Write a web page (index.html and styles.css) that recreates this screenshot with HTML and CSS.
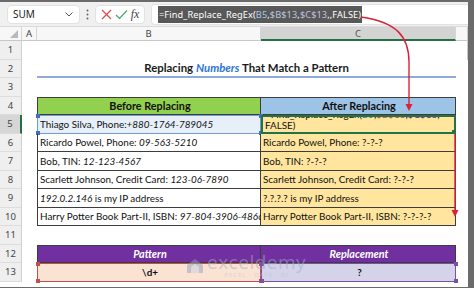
FILE: index.html
```html
<!DOCTYPE html>
<html lang="en">
<head>
    <meta charset="UTF-8">
    <title>Find_Replace_RegEx</title>
    <link rel="stylesheet" href="styles.css">
</head>
<body>
<div class="app">
    <div class="fbar">
        <div class="namebox">
            <span>SUM</span>
            <svg class="chev" width="8" height="5" viewBox="0 0 8 5"><path d="M0.5 0.5 L4 4 L7.5 0.5" fill="none" stroke="#555" stroke-width="1"/></svg>
        </div>
        <div class="dots">
            <svg width="3" height="11" viewBox="0 0 3 11"><circle cx="1.5" cy="1.5" r="1" fill="#666"/><circle cx="1.5" cy="5.5" r="1" fill="#666"/><circle cx="1.5" cy="9.5" r="1" fill="#666"/></svg>
        </div>
        <div class="btns">
            <svg width="11" height="11" viewBox="0 0 11 11"><path d="M1 1 L10 10 M10 1 L1 10" stroke="#e2474b" stroke-width="1.2"/></svg>
            <svg width="13" height="11" viewBox="0 0 13 11"><path d="M1 6 L4.5 9.5 L12 1.5" fill="none" stroke="#3fa86b" stroke-width="1.2"/></svg>
            <span class="fx">fx</span>
        </div>
        <div class="finput">
            <span class="sel">=Find_Replace_RegEx(<span class="ref1">B5</span>,<span class="ref2">$B$13</span>,<span class="ref3">$C$13</span>,,FALSE)</span>
        </div>
    </div>

    <div class="grid">
        <div class="corner"><svg width="8" height="8" viewBox="0 0 8 8"><path d="M8 0 L8 8 L0 8 Z" fill="#b9b9b9"/></svg></div>
        <div class="ch">A</div>
        <div class="ch">B</div>
        <div class="ch ch-sel">C</div>
        <div class="ch ch-end"></div>

        <!-- row 1 -->
        <div class="rh">1</div><div class="c"></div><div class="c"></div><div class="c"></div><div class="c"></div>

        <!-- row 2 -->
        <div class="rh">2</div><div class="c"></div>
        <div class="c title"><span>Replacing <em>Numbers</em> That Match a Pattern</span></div>
        <div class="c"></div>

        <!-- row 3 -->
        <div class="rh">3</div><div class="c"></div><div class="c"></div><div class="c"></div><div class="c"></div>

        <!-- row 4 -->
        <div class="rh">4</div><div class="c"></div>
        <div class="c t tl th th-green"><span>Before Replacing</span></div>
        <div class="c t th th-blue"><span>After Replacing</span></div>
        <div class="c"></div>

        <!-- row 5 -->
        <div class="rh rh-sel">5</div><div class="c"></div>
        <div class="c t tl ref-b5"><span>Thiago Silva, Phone:<i>+880-1764-789045</i></span>
            <span class="hd hd-blue tlh"></span><span class="hd hd-blue trh"></span><span class="hd hd-blue blh"></span><span class="hd hd-blue brh"></span>
        </div>
        <div class="c t out active">
            <div class="wrap">=Find_Replace_RegEx(<span class="fr1">B5</span>,<span class="fr2">$B$13</span>,<span class="fr3">$C$13</span>,<br>FALSE)</div>
            <span class="fill-handle"></span>
        </div>
        <div class="c"></div>

        <!-- row 6 -->
        <div class="rh">6</div><div class="c"></div>
        <div class="c t tl"><span>Ricardo Powel, Phone: <i>09-563-5210</i></span></div>
        <div class="c t out"><span>Ricardo Powel, Phone: ?-?-?</span></div>
        <div class="c"></div>

        <!-- row 7 -->
        <div class="rh">7</div><div class="c"></div>
        <div class="c t tl"><span>Bob, TIN: <i>12-123-4567</i></span></div>
        <div class="c t out"><span>Bob, TIN: ?-?-?</span></div>
        <div class="c"></div>

        <!-- row 8 -->
        <div class="rh">8</div><div class="c"></div>
        <div class="c t tl"><span>Scarlett Johnson, Credit Card: <i>123-06-7890</i></span></div>
        <div class="c t out"><span>Scarlett Johnson, Credit Card: ?-?-?</span></div>
        <div class="c"></div>

        <!-- row 9 -->
        <div class="rh">9</div><div class="c"></div>
        <div class="c t tl"><span><i>192.0.2.146</i> is my IP address</span></div>
        <div class="c t out"><span>?.?.?.? is my IP address</span></div>
        <div class="c"></div>

        <!-- row 10 -->
        <div class="rh">10</div><div class="c"></div>
        <div class="c t tl"><span>Harry Potter Book Part-II, ISBN: <i>97-804-3906-4866</i></span></div>
        <div class="c t out"><span>Harry Potter Book Part-II, ISBN: ?-?-?-?</span></div>
        <div class="c"></div>

        <!-- row 11 -->
        <div class="rh">11</div><div class="c"></div><div class="c"></div><div class="c"></div><div class="c"></div>

        <!-- row 12 -->
        <div class="rh">12</div><div class="c"></div>
        <div class="c t tl th th-purple"><span>Pattern</span></div>
        <div class="c t th th-purple"><span>Replacement</span></div>
        <div class="c"></div>

        <!-- row 13 -->
        <div class="rh">13</div><div class="c"></div>
        <div class="c t tl pat"><span>\d+</span>
            <span class="hd hd-red tlh"></span><span class="hd hd-red trh"></span><span class="hd hd-red blh"></span><span class="hd hd-red brh"></span>
        </div>
        <div class="c t rep"><span>?</span>
            <span class="hd hd-purple tlh"></span><span class="hd hd-purple trh"></span><span class="hd hd-purple blh"></span><span class="hd hd-purple brh"></span>
        </div>
        <div class="c"></div>
    </div>

    <div class="watermark">
        <svg width="18" height="16" viewBox="0 0 18 16"><path d="M9 1 L17 7 L17 15 L1 15 L1 7 Z" fill="#8fa3bf"/><path d="M5 9 L9 6 L13 9 L13 15 L5 15 Z" fill="#c7d1e0"/></svg>
        <div class="wm-text">
            <span class="wm-big">exceldemy</span>
            <span class="wm-small">EXCEL · DATA · BI</span>
        </div>
    </div>

    <svg class="arrows" width="474" height="288" viewBox="0 0 474 288">
        <path d="M361 17 C 396 22, 409 36, 409 62 L 409 105" fill="none" stroke="#d9213b" stroke-width="1.4"/>
        <path d="M405.5 104 L412.5 104 L409 111 Z" fill="#d9213b"/>
        <path d="M455 134 L455 211" fill="none" stroke="#d9213b" stroke-width="1.4"/>
        <path d="M451.5 210 L458.5 210 L455 217 Z" fill="#d9213b"/>
    </svg>
</div>
</body>
</html>
```

FILE: styles.css
```css
* {
    box-sizing: border-box;
}

body {
    margin: 0;
    background: #6b6b6b;
    font-family: 'Lato', 'Liberation Sans', sans-serif;
}

.app {
    position: relative;
    width: 474px;
    height: 288px;
    overflow: hidden;
    background: #6b6b6b;
    padding: 2px 6px 0 0;
}

/* Formula bar */
.fbar {
    height: 25px;
    background: #f0f0f0;
    display: flex;
    align-items: center;
    padding-left: 7px;
    border-bottom: 1px solid #dadada;
}

.namebox {
    width: 73px;
    height: 19px;
    background: #fff;
    border: 1px solid #e2e2e2;
    border-radius: 4px;
    display: flex;
    align-items: center;
    justify-content: space-between;
    padding: 0 6px 0 5px;
    font-family: 'Noto Sans', sans-serif;
    font-size: 10px;
    color: #222;
}

.dots {
    width: 15px;
    display: flex;
    justify-content: center;
}

.btns {
    width: 50px;
    height: 19px;
    background: #fff;
    border: 1px solid #e2e2e2;
    border-radius: 4px;
    display: flex;
    align-items: center;
    justify-content: space-around;
    padding: 0 3px;
}

.fx {
    font-family: 'Liberation Serif', serif;
    font-style: italic;
    font-size: 12px;
    color: #444;
}

.finput {
    flex: 1;
    margin-left: 6px;
    height: 21px;
    background: #fff;
    border: 1px solid #e2e2e2;
    border-right: none;
    border-radius: 4px 0 0 4px;
    display: flex;
    align-items: center;
    padding-left: 6px;
}

.sel {
    background: #585858;
    color: #fff;
    font-family: 'Noto Sans', sans-serif;
    font-size: 9.2px;
    line-height: 17px;
    padding: 0 1px;
    letter-spacing: 0.1px;
}

.ref1 { color: #a9c7ea; }
.ref2 { color: #b9c7dc; }
.ref3 { color: #c2bfe0; }

/* Sheet grid */
.grid {
    display: grid;
    grid-template-columns: 22px 15px 224px 195px 1fr;
    grid-template-rows: 14px repeat(13, 18.5px);
    background: #fff;
    height: 260px;
    font-size: 9.9px;
    color: #111;
}

.corner {
    background: #f7f7f7;
    border-right: 1px solid #d6d6d6;
    border-bottom: 1px solid #c8c8c8;
    display: flex;
    align-items: flex-end;
    justify-content: flex-end;
    padding: 0 3px 2px 0;
}

.ch {
    background: #f7f7f7;
    border-right: 1px solid #d6d6d6;
    border-bottom: 1px solid #c8c8c8;
    font-family: 'Noto Sans', sans-serif;
    font-size: 9.5px;
    color: #444;
    display: flex;
    align-items: center;
    justify-content: center;
}

.ch-sel {
    background: #d3d3d3;
    border-bottom: 2px solid #217346;
    color: #555;
}

.ch-end {
    border-right: 1px solid #c9c9c9;
}

.rh {
    background: #efefef;
    border-right: 1px solid #d0d0d0;
    border-bottom: 1px solid #dddddd;
    font-family: 'Noto Sans', sans-serif;
    font-size: 9.5px;
    color: #444;
    display: flex;
    align-items: center;
    justify-content: center;
}

.rh-sel {
    background: #d6d6d6;
    border-right: 2px solid #217346;
}

.c {
    position: relative;
    display: flex;
    align-items: center;
    white-space: nowrap;
}

.grid > .c:nth-child(5n) {
    border-right: 1px solid #c9c9c9;
}

.title {
    grid-column: span 2;
    justify-content: center;
    font-weight: 700;
    font-size: 11.4px;
    border-bottom: 2px solid #8ea9db;
    color: #1b1b1b;
}

.title em {
    color: #2e75d6;
}

/* Table cells */
.t {
    padding-left: 2px;
    border-right: 1px solid #3d3d3d;
    border-bottom: 1px solid #3d3d3d;
}

.tl {
    border-left: 1px solid #3d3d3d;
}

.th {
    justify-content: center;
    font-weight: 700;
    font-size: 10.8px;
    border-top: 1px solid #3d3d3d;
}

.th-green { background: #92d050; }
.th-blue { background: #9dc3e6; }

.th-purple {
    background: #7030a0;
    color: #fff;
    font-style: italic;
}

.out {
    background: #ffe59e;
}

.ref-b5 {
    background: #e7eff9;
    border: 1px solid #6f9bd8;
}

.active {
    align-items: flex-end;
    overflow: hidden;
    border: 2px solid #217346;
    line-height: 11.5px;
}

.fr1 { color: #3f6fc2; }
.fr2 { color: #c0504d; }
.fr3 { color: #7030a0; }

.fill-handle {
    position: absolute;
    right: -2px;
    bottom: -2px;
    width: 4px;
    height: 4px;
    background: #217346;
}

.pat {
    background: #fbe3d3;
    justify-content: center;
    font-weight: 700;
    border: 1.5px solid #c0504d;
}

.rep {
    background: #d5d3ea;
    justify-content: center;
    font-weight: 700;
    border: 1.5px solid #7b4fa8;
}

/* range corner handles */
.hd {
    position: absolute;
    width: 4px;
    height: 4px;
}

.hd-blue { background: #3f6fc2; }
.hd-red { background: #c0504d; }
.hd-purple { background: #7b4fa8; }

.tlh { left: -2.5px; top: -2.5px; }
.trh { right: -2.5px; top: -2.5px; }
.blh { left: -2.5px; bottom: -2.5px; }
.brh { right: -2.5px; bottom: -2.5px; }

/* overlays */
.watermark {
    position: absolute;
    left: 186px;
    top: 253px;
    display: flex;
    align-items: center;
    gap: 3px;
    opacity: 0.5;
}

.wm-text {
    display: flex;
    flex-direction: column;
    align-items: center;
    line-height: 1;
}

.wm-big {
    font-family: 'Open Sans', sans-serif;
    font-size: 19px;
    color: #9fb0c8;
    letter-spacing: 0.5px;
}

.wm-small {
    font-family: 'Open Sans', sans-serif;
    font-size: 6px;
    color: #b7c2d2;
    letter-spacing: 1px;
}

.arrows {
    position: absolute;
    left: 0;
    top: 0;
    pointer-events: none;
}
```
